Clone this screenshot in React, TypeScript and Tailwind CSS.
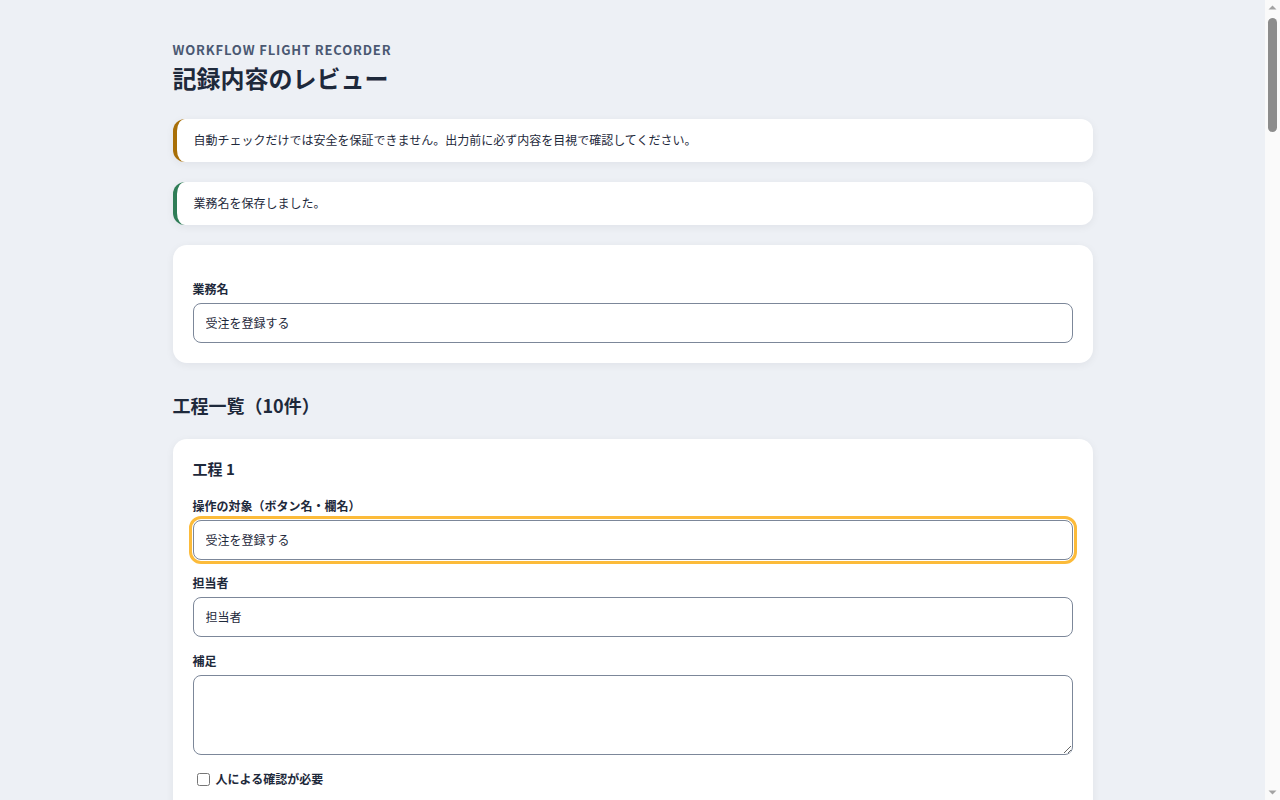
import React from "react";

const steps = [
  { target: "受注を登録する", owner: "担当者", note: "" },
  { target: "顧客名", owner: "担当者", note: "" },
  { target: "商品コード", owner: "担当者", note: "" },
  { target: "数量", owner: "担当者", note: "" },
  { target: "納品日", owner: "担当者", note: "" },
  { target: "備考", owner: "担当者", note: "" },
  { target: "確認する", owner: "担当者", note: "" },
  { target: "登録する", owner: "担当者", note: "" },
  { target: "受注一覧", owner: "担当者", note: "" },
  { target: "閉じる", owner: "担当者", note: "" },
];

const inputCls =
  "block w-full h-10 rounded-lg border border-[#7c8799] bg-white px-3 pb-px text-xs text-[#1e293b] outline-none";

function StepCard({ idx, s }: { idx: number; s: (typeof steps)[number] }) {
  return (
    <section className="rounded-[14px] bg-white px-5 pt-5 pb-6 shadow-[0_2px_8px_rgba(15,23,42,0.06)]">
      <h3 className="text-[15px] leading-5 font-bold text-[#1e293b]">工程 {idx + 1}</h3>
      <div className="mt-[19px]">
        <label className="block text-xs leading-4 font-bold text-[#1e293b] mb-1.5">
          操作の対象（ボタン名・欄名）
        </label>
        <input
          className={
            inputCls +
            (idx === 0
              ? " outline-[3px] outline-solid outline-[#fcbb3a] outline-offset-1"
              : "")
          }
          defaultValue={s.target}
        />
      </div>
      <div className="mt-[15px]">
        <label className="block text-xs leading-4 font-bold text-[#1e293b] mb-1.5">担当者</label>
        <input className={inputCls} defaultValue={s.owner} />
      </div>
      <div className="mt-4">
        <label className="block text-xs leading-4 font-bold text-[#1e293b] mb-1.5">補足</label>
        <textarea
          className="block w-full h-20 rounded-lg border border-[#7c8799] bg-white px-3 py-2 text-xs text-[#1e293b] outline-none"
          defaultValue={s.note}
        />
      </div>
      <label className="mt-[15px] flex items-center text-xs leading-[18px] font-bold text-[#1e293b]">
        <input type="checkbox" className="ml-1 mr-1.5 w-[13px] h-[13px]" />
        人による確認が必要
      </label>
      <div className="mt-4 flex gap-2">
        <button className="h-8 rounded-lg border border-[#7c8799] bg-white px-3 text-xs text-[#1e293b]">
          上へ
        </button>
        <button className="h-8 rounded-lg border border-[#7c8799] bg-white px-3 text-xs text-[#1e293b]">
          下へ
        </button>
        <button className="h-8 rounded-lg border border-[#b91c1c] bg-white px-3 text-xs text-[#b91c1c]">
          この工程を削除
        </button>
      </div>
    </section>
  );
}

function FakeScrollbar() {
  return (
    <div className="w-[15px] shrink-0 h-screen bg-[#fafafa] flex flex-col items-center">
      <svg width="15" height="15" viewBox="0 0 15 15" className="shrink-0">
        <path d="M3.5 9.5 L7.5 5.5 L11.5 9.5 Z" fill="#a3a3a3" />
      </svg>
      <div className="mt-[3px] w-[9px] h-[114px] rounded-full bg-[#8c8c8c]" />
      <div className="flex-1" />
      <svg width="15" height="15" viewBox="0 0 15 15" className="shrink-0">
        <path d="M3.5 5.5 L7.5 9.5 L11.5 5.5 Z" fill="#a3a3a3" />
      </svg>
    </div>
  );
}

export default function App() {
  return (
    <div
      className="flex h-screen overflow-hidden bg-[#edf0f5] text-[#1e293b]"
      style={{ fontFamily: '"Noto Sans CJK JP", "Noto Sans", sans-serif' }}
    >
      <div className="flex-1 min-w-0 h-screen overflow-hidden">
        <main className="mx-auto w-[920px] pt-10 pb-16 flex flex-col gap-5">
          <header className="mb-1.5">
            <p className="text-[13px] leading-[19px] font-semibold tracking-[0.065em] text-[#4a5872]">
              WORKFLOW FLIGHT RECORDER
            </p>
            <h1 className="mt-[3px] text-2xl leading-[31px] font-bold text-[#1e293b]">
              記録内容のレビュー
            </h1>
          </header>

          <div className="rounded-xl border-l-4 border-[#a86f08] bg-white pl-[17px] pt-[11px] pb-[13px] text-xs leading-[19px] text-[#1e293b] shadow-[0_2px_8px_rgba(15,23,42,0.06)]">
            自動チェックだけでは安全を保証できません。出力前に必ず内容を目視で確認してください。
          </div>
          <div className="rounded-xl border-l-4 border-[#2f7d57] bg-white pl-[17px] pt-[11px] pb-[13px] text-xs leading-[19px] text-[#1e293b] shadow-[0_2px_8px_rgba(15,23,42,0.06)]">
            業務名を保存しました。
          </div>

          <section className="rounded-[14px] bg-white px-5 pt-9 pb-5 shadow-[0_2px_8px_rgba(15,23,42,0.06)]">
            <label className="block text-xs leading-4 font-bold text-[#1e293b] mb-1.5">業務名</label>
            <input className={inputCls} defaultValue="受注を登録する" />
          </section>

          <h2 className="mt-[8px] text-lg leading-[28px] font-bold text-[#1e293b]">工程一覧（10件）</h2>

          {steps.map((s, i) => (
            <StepCard key={i} idx={i} s={s} />
          ))}
        </main>
      </div>
      <FakeScrollbar />
    </div>
  );
}
